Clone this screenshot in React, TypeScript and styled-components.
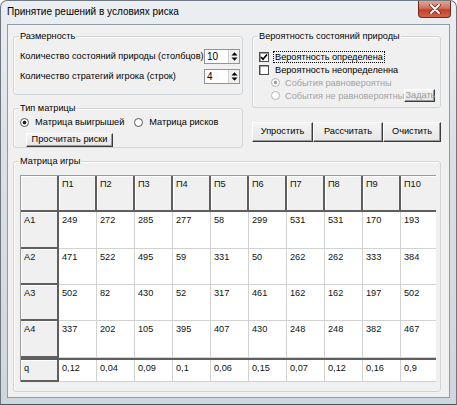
import React from "react";
import styled, { createGlobalStyle } from "styled-components";

const GlobalStyle = createGlobalStyle`
  html, body {
    margin: 0;
    padding: 0;
    width: 457px;
    height: 405px;
    overflow: hidden;
    background: #ffffff;
  }
  * {
    box-sizing: border-box;
  }
`;

const UI_FONT = `"Liberation Sans", Arial, sans-serif`;

const Window = styled.div`
  width: 457px;
  height: 405px;
  display: flex;
  flex-direction: column;
  background: linear-gradient(180deg, #eceff2 0%, #dbe1e6 35%, #cfd7de 100%);
  border: 1px solid #6f7880;
  border-bottom: 1px solid #2f5f66;
  border-radius: 7px 7px 0 0;
  overflow: hidden;
  font-family: ${UI_FONT};
`;

const TitleBar = styled.div`
  height: 23px;
  display: flex;
  align-items: flex-start;
  padding-left: 6px;
`;

const Title = styled.div`
  flex: 1;
  font-size: 10px;
  line-height: 22px;
  color: #000;
`;

const CloseButton = styled.div`
  width: 33px;
  height: 17px;
  margin-right: 5px;
  display: flex;
  align-items: center;
  justify-content: center;
  background: linear-gradient(180deg, #e3a596 0%, #d2705e 45%, #c2412c 55%, #d0644a 100%);
  border: 1px solid #6b2a22;
  border-top: none;
  border-radius: 0 0 4px 4px;
`;

const Client = styled.div`
  flex: 1;
  margin: 0 6px 6px 6px;
  background: #f0f0f0;
  border: 1px solid #8f9ba6;
  padding: 6px 8px 0 5px;
  display: flex;
  flex-direction: column;
`;

const TopRow = styled.div`
  display: flex;
  gap: 9px;
  height: 117px;
`;

const Column = styled.div<{ $w: number }>`
  width: ${(p) => p.$w}px;
  display: flex;
  flex-direction: column;
`;

const Group = styled.fieldset<{ $h: number; $mt?: number; $pr?: number }>`
  margin: ${(p) => p.$mt ?? 0}px 0 0 0;
  padding: 0 ${(p) => p.$pr ?? 6}px 0 6px;
  min-width: 0;
  height: ${(p) => p.$h}px;
  border: 1px solid #d0d5da;
  border-radius: 3px;
  box-shadow: inset 1px 1px 0 #ffffff;
`;

const Legend = styled.legend`
  padding: 0 1px;
  margin-left: -1px;
  font-size: 9.2px;
  line-height: 11px;
  color: #000;
`;

const Row = styled.div<{ $h: number; $mt?: number }>`
  height: ${(p) => p.$h}px;
  margin-top: ${(p) => p.$mt ?? 0}px;
  display: flex;
  align-items: center;
`;

const Label = styled.span<{ $disabled?: boolean }>`
  font-size: 9.2px;
  color: ${(p) => (p.$disabled ? "#a3a3a3" : "#000")};
  white-space: nowrap;
`;

const FocusLabel = styled(Label)`
  outline: 1px dotted #000;
  outline-offset: 0;
  padding: 0 1px;
  margin-left: -1px;
`;

const Spin = styled.div`
  margin-left: auto;
  width: 36px;
  height: 15px;
  display: flex;
  background: #fff;
  border: 1px solid #8d949c;
`;

const SpinValue = styled.span`
  flex: 1;
  font-size: 10px;
  line-height: 13px;
  padding-left: 2px;
`;

const SpinArrows = styled.div`
  width: 11px;
  display: flex;
  align-items: center;
  justify-content: center;
  background: #f0f0f0;
  border-left: 1px solid #d0d0d0;
`;

const CheckBox = styled.span`
  width: 10px;
  height: 10px;
  margin-right: 6px;
  flex: none;
  display: flex;
  align-items: center;
  justify-content: center;
  background: #fff;
  border: 1px solid #4d4d4d;
  box-shadow: inset 1px 1px 0 #a0a0a0;
`;

const Radio = styled.span<{ $on?: boolean; $disabled?: boolean; $ml?: number; $gap: number }>`
  width: 9px;
  height: 9px;
  margin-left: ${(p) => p.$ml ?? 0}px;
  margin-right: ${(p) => p.$gap}px;
  flex: none;
  border-radius: 50%;
  border: 1px solid ${(p) => (p.$disabled ? "#b5b5b5" : "#555")};
  background: ${(p) =>
    p.$on
      ? `radial-gradient(circle, ${p.$disabled ? "#a8a8a8" : "#222"} 0 1.6px, #fff 2.2px)`
      : "#fff"};
`;

const Btn = styled.button<{ $w: number; $h: number; $ml?: number; $mt?: number; $disabled?: boolean; $push?: boolean }>`
  width: ${(p) => p.$w}px;
  height: ${(p) => p.$h}px;
  margin-top: ${(p) => p.$mt ?? 0}px;
  margin-left: ${(p) => (p.$push ? "auto" : `${p.$ml ?? 0}px`)};
  padding: 0;
  flex: none;
  white-space: nowrap;
  font-family: ${UI_FONT};
  font-size: 9.2px;
  line-height: 1;
  color: ${(p) => (p.$disabled ? "#9a9a9a" : "#000")};
  background: linear-gradient(180deg, #f4f4f4 0%, #e6e6e6 100%);
  border: 1px solid;
  border-color: #ffffff #3c3c3c #3c3c3c #ffffff;
  box-shadow: inset -1px -1px 0 #9a9a9a;
  border-radius: 0;
`;

const ButtonRow = styled.div`
  display: flex;
  margin-top: 14px;
`;

const GridBox = styled.div`
  margin-top: 8px;
  width: 416px;
  height: 207px;
  overflow: hidden;
  background: #fff;
  border-top: 1px solid #9a9a9a;
  border-left: 1px solid #9a9a9a;
`;

const GridRow = styled.div<{ $h: number; $sep?: boolean }>`
  display: flex;
  height: ${(p) => p.$h}px;
  border-top: ${(p) => (p.$sep ? "2px solid #5f5f5f" : "none")};
`;

const Cell = styled.div<{ $kind: "data" | "fixed" | "head" }>`
  width: 38px;
  flex: none;
  padding: 3px 0 0 3px;
  font-size: 9.2px;
  line-height: 11px;
  color: #111;
  background: ${(p) => (p.$kind === "data" ? "#ffffff" : "#f0f0f0")};
  border-right: ${(p) => (p.$kind === "data" ? "1px solid #d2d2d2" : "2px solid #5f5f5f")};
  border-bottom: ${(p) => (p.$kind === "data" ? "1px solid #d2d2d2" : "2px solid #5f5f5f")};
  box-shadow: ${(p) => (p.$kind === "data" ? "none" : "inset 1px 1px 0 #ffffff")};
`;

const heads = ["П1", "П2", "П3", "П4", "П5", "П6", "П7", "П8", "П9", "П10"];

const rows: { name: string; h: number; values: string[] }[] = [
  { name: "A1", h: 37, values: ["249", "272", "285", "277", "58", "299", "531", "531", "170", "193"] },
  { name: "A2", h: 36, values: ["471", "522", "495", "59", "331", "50", "262", "262", "333", "384"] },
  { name: "A3", h: 36, values: ["502", "82", "430", "52", "317", "461", "162", "162", "197", "502"] },
  { name: "A4", h: 37, values: ["337", "202", "105", "395", "407", "430", "248", "248", "382", "467"] },
];

const probs = ["0,12", "0,04", "0,09", "0,1", "0,06", "0,15", "0,07", "0,12", "0,16", "0,9"];

const SpinIcon = () => (
  <svg width="7" height="11" viewBox="0 0 7 11">
    <polygon points="0.5,4.5 3.5,1.2 6.5,4.5" fill="#000" />
    <polygon points="0.5,6.5 3.5,9.8 6.5,6.5" fill="#000" />
  </svg>
);

const CheckIcon = () => (
  <svg width="8" height="8" viewBox="0 0 8 8">
    <path d="M1 4 L3 6.2 L7 1.5" stroke="#000" strokeWidth="1.7" fill="none" />
  </svg>
);

const CloseIcon = () => (
  <svg width="12" height="10" viewBox="0 0 12 10">
    <path d="M2 1 L10 9 M10 1 L2 9" stroke="#6a2218" strokeWidth="3.4" strokeLinecap="round" />
    <path d="M2 1 L10 9 M10 1 L2 9" stroke="#ffffff" strokeWidth="1.9" strokeLinecap="round" />
  </svg>
);

const App = () => {
  return (
    <>
      <GlobalStyle />
      <Window>
        <TitleBar>
          <Title>Принятие решений в условиях риска</Title>
          <CloseButton>
            <CloseIcon />
          </CloseButton>
        </TitleBar>
        <Client>
          <TopRow>
            <Column $w={230}>
              <Group $h={64} $pr={2}>
                <Legend>Размерность</Legend>
                <Row $h={20} $mt={4}>
                  <Label>Количество состояний природы (столбцов)</Label>
                  <Spin>
                    <SpinValue>10</SpinValue>
                    <SpinArrows>
                      <SpinIcon />
                    </SpinArrows>
                  </Spin>
                </Row>
                <Row $h={20}>
                  <Label>Количество стратегий игрока (строк)</Label>
                  <Spin>
                    <SpinValue>4</SpinValue>
                    <SpinArrows>
                      <SpinIcon />
                    </SpinArrows>
                  </Spin>
                </Row>
              </Group>
              <Group $h={45} $mt={8}>
                <Legend>Тип матрицы</Legend>
                <Row $h={12} $mt={2}>
                  <Radio $on $gap={6} />
                  <Label>Матрица выигрышей</Label>
                  <Radio $ml={10} $gap={6} />
                  <Label>Матрица рисков</Label>
                </Row>
                <Btn $w={87} $h={14} $ml={6} $mt={1}>
                  Просчитать риски
                </Btn>
              </Group>
            </Column>
            <Column $w={189}>
              <Group $h={77} $pr={5}>
                <Legend>Вероятность состояний природы</Legend>
                <Row $h={13} $mt={8}>
                  <CheckBox>
                    <CheckIcon />
                  </CheckBox>
                  <FocusLabel>Вероятность определена</FocusLabel>
                </Row>
                <Row $h={13}>
                  <CheckBox />
                  <Label>Вероятность неопределенна</Label>
                </Row>
                <Row $h={13}>
                  <Radio $on $disabled $ml={12} $gap={5} />
                  <Label $disabled>События равновероятны</Label>
                </Row>
                <Row $h={13}>
                  <Radio $disabled $ml={12} $gap={5} />
                  <Label $disabled>События не равновероятны</Label>
                  <Btn $w={31} $h={13} $push $disabled>
                    Задать
                  </Btn>
                </Row>
              </Group>
              <ButtonRow>
                <Btn $w={61} $h={20}>
                  Упростить
                </Btn>
                <Btn $w={70} $h={20}>
                  Рассчитать
                </Btn>
                <Btn $w={58} $h={20}>
                  Очистить
                </Btn>
              </ButtonRow>
            </Column>
          </TopRow>
          <Group $h={236} $mt={8}>
            <Legend>Матрица игры</Legend>
            <GridBox>
              <GridRow $h={36}>
                <Cell $kind="head" />
                {heads.map((h) => (
                  <Cell key={h} $kind="head">
                    {h}
                  </Cell>
                ))}
              </GridRow>
              {rows.map((r) => (
                <GridRow key={r.name} $h={r.h}>
                  <Cell $kind="fixed">{r.name}</Cell>
                  {r.values.map((v, i) => (
                    <Cell key={i} $kind="data">
                      {v}
                    </Cell>
                  ))}
                </GridRow>
              ))}
              <GridRow $h={24} $sep>
                <Cell $kind="fixed">q</Cell>
                {probs.map((v, i) => (
                  <Cell key={i} $kind="data">
                    {v}
                  </Cell>
                ))}
              </GridRow>
            </GridBox>
          </Group>
        </Client>
      </Window>
    </>
  );
};

export default App;
